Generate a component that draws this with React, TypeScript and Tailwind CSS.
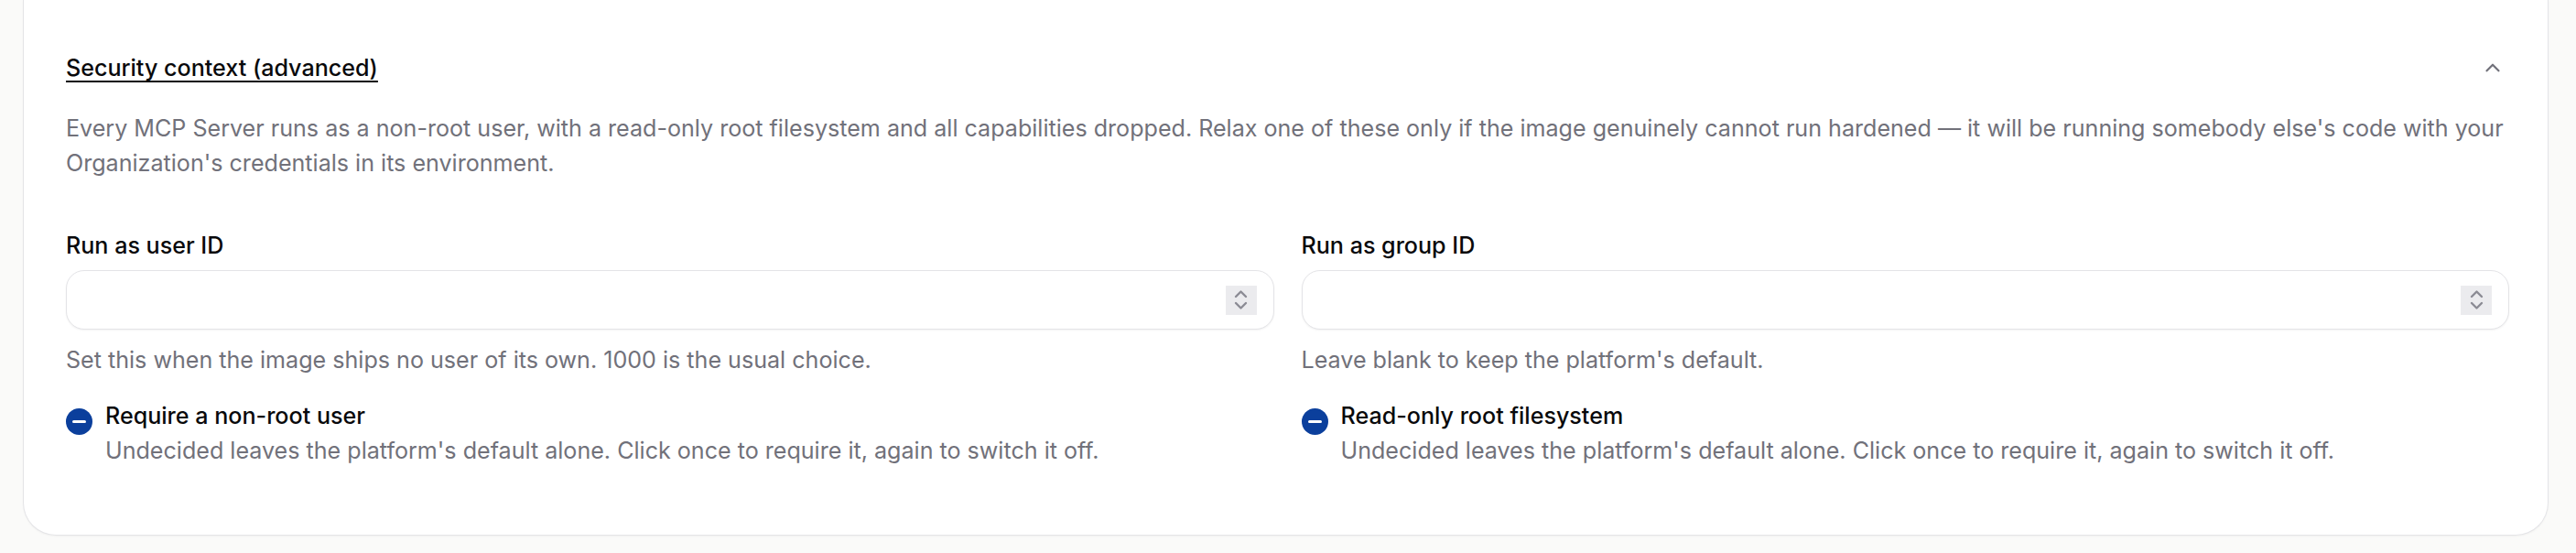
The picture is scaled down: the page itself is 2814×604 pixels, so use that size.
import React from "react";

const font = { fontFamily: "Inter, 'Noto Sans', sans-serif" };

function ChevronUp() {
  return (
    <svg width="26" height="26" viewBox="0 0 24 24" fill="none" stroke="#71717a" strokeWidth="2" strokeLinecap="round" strokeLinejoin="round">
      <path d="m18 15-6-6-6 6" />
    </svg>
  );
}

function Spinner() {
  return (
    <div className="flex h-[32px] w-[34px] flex-col items-center justify-center gap-[3px] bg-[#ebebee]">
      <svg width="15" height="10" viewBox="0 0 15 10" fill="none" stroke="#8b8b94" strokeWidth="2.4" strokeLinecap="round" strokeLinejoin="round">
        <path d="M2 8 7.5 2.5 13 8" />
      </svg>
      <svg width="15" height="10" viewBox="0 0 15 10" fill="none" stroke="#8b8b94" strokeWidth="2.4" strokeLinecap="round" strokeLinejoin="round">
        <path d="M2 2 7.5 7.5 13 2" />
      </svg>
    </div>
  );
}

function NumberField({ label, help }: { label: string; help: string }) {
  return (
    <div className="flex flex-col">
      <label className="text-[25.1px] leading-[36px] font-medium text-[#09090b]">{label}</label>
      <div className="mt-[9px] flex h-[65px] items-center justify-end rounded-[20px] border border-[#e4e4e7] bg-white pr-[18px] shadow-[0_1px_2px_rgba(0,0,0,0.05)]">
        <Spinner />
      </div>
      <p className="mt-[15px] text-[25.1px] leading-[36px] text-[#71717a]">{help}</p>
    </div>
  );
}

function TriState({ label }: { label: string }) {
  return (
    <div className="mt-[24px] flex items-start gap-[14px]">
      <button className="mt-[11px] flex h-[29px] w-[29px] shrink-0 items-center justify-center rounded-full bg-[#0b3f9c]">
        <span className="block h-[2.5px] w-[15px] rounded-full bg-white" />
      </button>
      <div className="flex flex-col">
        <span className="text-[25.1px] leading-[38px] font-medium text-[#09090b]">{label}</span>
        <span className="text-[25.1px] leading-[38px] text-[#71717a]">
          Undecided leaves the platform's default alone. Click once to require it, again to switch it off.
        </span>
      </div>
    </div>
  );
}

export default function App() {
  return (
    <div className="min-h-screen bg-[#fafaf9] pl-[25px] pr-[30px]" style={font}>
      <section className="rounded-b-[36px] border border-t-0 border-[#e4e4e7] bg-white pt-[56px] pb-[73px] pl-[46px] pr-[42px] shadow-[0_1px_2px_rgba(0,0,0,0.04)]">
        <div className="flex items-center justify-between">
          <h3 className="text-[25.1px] leading-[36px] font-medium text-[#09090b] underline underline-offset-[5px] decoration-[1.5px]">
            Security context (advanced)
          </h3>
          <span className="mr-[5px] flex items-center">
            <ChevronUp />
          </span>
        </div>
        <p className="mt-[29px] text-[25.1px] leading-[38px] text-[#71717a]">
          Every MCP Server runs as a non-root user, with a read-only root filesystem and all capabilities dropped. Relax one of these only if the image genuinely cannot run hardened — it will be running somebody else's code with your Organization's credentials in its environment.
        </p>
        <div className="mt-[53px] grid grid-cols-2 gap-x-[30px]">
          <div className="flex flex-col">
            <NumberField label="Run as user ID" help="Set this when the image ships no user of its own. 1000 is the usual choice." />
            <TriState label="Require a non-root user" />
          </div>
          <div className="flex flex-col">
            <NumberField label="Run as group ID" help="Leave blank to keep the platform's default." />
            <TriState label="Read-only root filesystem" />
          </div>
        </div>
      </section>
    </div>
  );
}
